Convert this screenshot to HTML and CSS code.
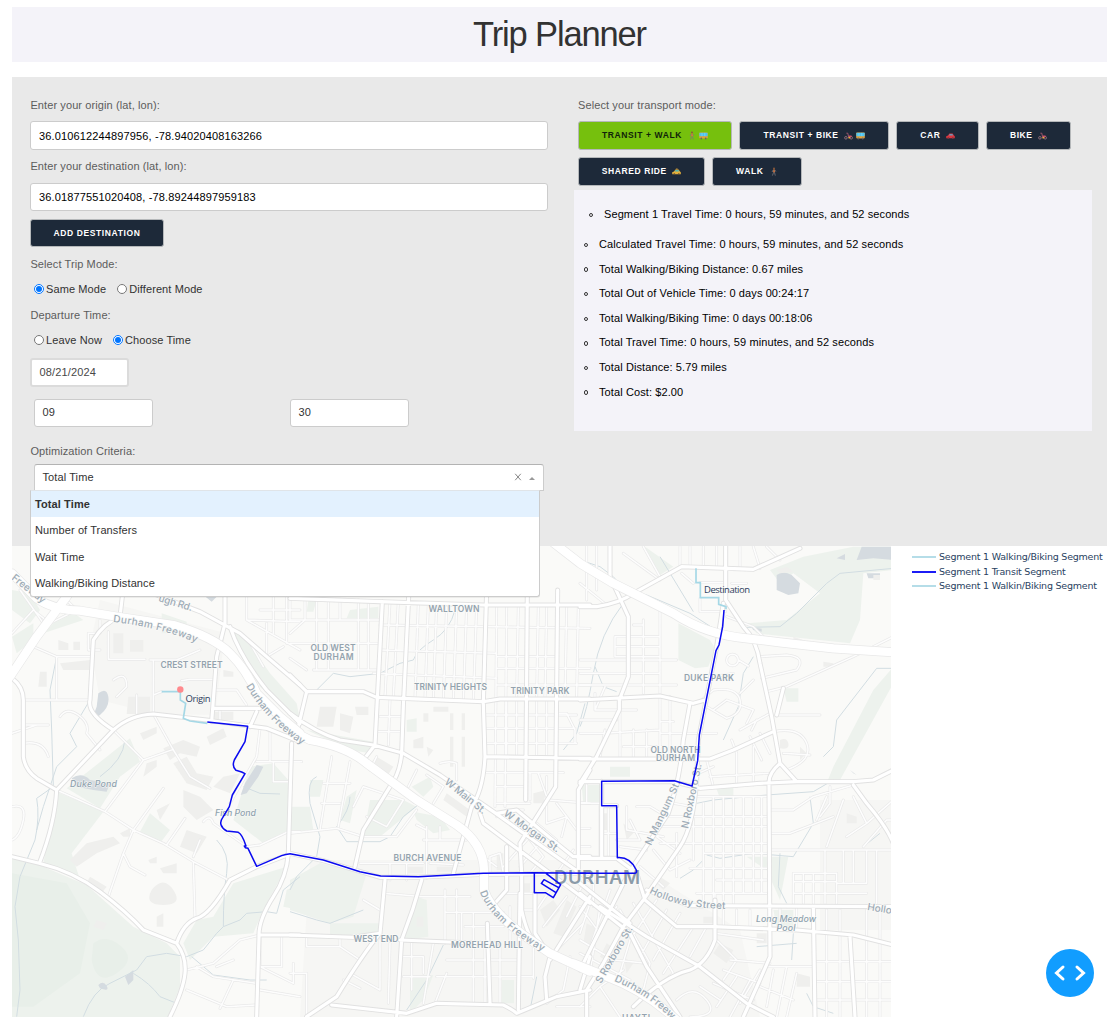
FILE: index.html
```html
<!DOCTYPE html>
<html lang="en">
<head>
<meta charset="utf-8">
<title>Trip Planner</title>
<link rel="stylesheet" href="styles.css">
</head>
<body>
<svg class="defs" width="0" height="0" aria-hidden="true">
  <symbol id="i-walk" viewBox="0 0 9 9"><circle cx="5" cy="1.4" r="1" fill="#8a5a3c"/><path d="M4.200 2.600h1.600l.2 3H4.200z" fill="#d8763e"/><path d="M4.200 3L3 5M5.900 3l1 1.600M4.600 5.400L3.400 8.600M5.500 5.400l.8 3.200" stroke="#77777c" stroke-width=".8" fill="none"/></symbol>
  <symbol id="i-bus" viewBox="0 0 9 9"><rect x=".2" y="1.600" width="8.600" height="5.800" rx=".8" fill="#e2a13c"/><rect x=".4" y="1.800" width="8.200" height="3.400" fill="#4dc3f0"/><path d="M3 1.800v3.400M5.800 1.800v3.400" stroke="#9be3ff" stroke-width=".5"/><circle cx="2.300" cy="7.500" r=".9" fill="#666"/><circle cx="6.700" cy="7.500" r=".9" fill="#666"/></symbol>
  <symbol id="i-bike" viewBox="0 0 9 9"><g fill="none" stroke="#96727f" stroke-width=".9"><circle cx="1.900" cy="6.800" r="1.300"/><circle cx="7.200" cy="6.800" r="1.300"/></g><path d="M2.400 2.200h1.400L4.600 6h2" stroke="#a85a72" stroke-width=".9" fill="none"/><path d="M4.600 4.500h2.800l.6 1.600H5z" fill="#c8526a"/><rect x="4.400" y="6" width="1.800" height="1.400" fill="#f3b13a"/></symbol>
  <symbol id="i-car" viewBox="0 0 9 9"><path d="M.2 7.200V5.200L2 4.600 3.400 2.400h3.200L8 4.600l.8.7v1.900z" fill="#d9363f"/><path d="M2.800 4.500L3.800 3h2.500l.9 1.500z" fill="#6f97b5"/><circle cx="2.300" cy="7.200" r=".9" fill="#6d3940"/><circle cx="6.800" cy="7.200" r=".9" fill="#6d3940"/></symbol>
  <symbol id="i-taxi" viewBox="0 0 9 9"><path d="M.2 7.200V5.200L2 4.600 3.400 2.400h3.200L8 4.600l.8.7v1.900z" fill="#e5b03a"/><path d="M2.600 4.600L3.600 2.900h2.700l1.100 1.700z" fill="#50b5b5"/><path d="M3.900 1.600h1.800v.8H3.900z" fill="#e9a93a"/><circle cx="2.300" cy="7.200" r=".9" fill="#5b4a33"/><circle cx="6.800" cy="7.200" r=".9" fill="#5b4a33"/></symbol>
</svg>

<header class="title-bar"><h1>Trip Planner</h1></header>

<main class="panel">
  <section class="form">
    <label class="label">Enter your origin (lat, lon):</label>
    <div class="field">36.010612244897956, -78.94020408163266</div>
    <label class="label label-dest">Enter your destination (lat, lon):</label>
    <div class="field">36.01877551020408, -78.89244897959183</div>
    <button class="btn btn-add">Add Destination</button>
    <div class="label label-mode">Select Trip Mode:</div>
    <div class="radios">
      <label><input type="radio" name="mode" checked>Same Mode</label>
      <label><input type="radio" name="mode">Different Mode</label>
    </div>
    <div class="label label-dep">Departure Time:</div>
    <div class="radios radios-time">
      <label><input type="radio" name="dep">Leave Now</label>
      <label><input type="radio" name="dep" checked>Choose Time</label>
    </div>
    <div class="field date">08/21/2024</div>
    <div class="time-row">
      <div class="field time">09</div>
      <div class="field time">30</div>
    </div>
    <div class="label label-opt">Optimization Criteria:</div>
    <div class="select">
      <div class="select-box"><span>Total Time</span><svg class="clear" width="8" height="8" viewBox="0 0 8 8"><path d="M1.2.8l5.6 6.4M6.8.8L1.2 7.2"/></svg><i class="arrow"></i></div>
      <ul class="menu">
        <li class="active">Total Time</li>
        <li>Number of Transfers</li>
        <li>Wait Time</li>
        <li>Walking/Biking Distance</li>
      </ul>
    </div>
  </section>

  <section class="modes">
    <div class="label">Select your transport mode:</div>
    <div class="mode-row">
      <button class="btn w154 selected">Transit + Walk <svg><use href="#i-walk"/></svg><svg><use href="#i-bus"/></svg></button>
      <button class="btn w150">Transit + Bike <svg><use href="#i-bike"/></svg><svg><use href="#i-bus"/></svg></button>
      <button class="btn w83">Car <svg><use href="#i-car"/></svg></button>
      <button class="btn w85">Bike <svg><use href="#i-bike"/></svg></button>
      <button class="btn w127">Shared Ride <svg><use href="#i-taxi"/></svg></button>
      <button class="btn w90">Walk <svg><use href="#i-walk"/></svg></button>
    </div>
    <ul class="results">
      <li class="segment">Segment 1 Travel Time: 0 hours, 59 minutes, and 52 seconds</li>
      <li>Calculated Travel Time: 0 hours, 59 minutes, and 52 seconds</li>
      <li>Total Walking/Biking Distance: 0.67 miles</li>
      <li>Total Out of Vehicle Time: 0 days 00:24:17</li>
      <li>Total Walking/Biking Time: 0 days 00:18:06</li>
      <li>Total Travel Time: 0 hours, 59 minutes, and 52 seconds</li>
      <li>Total Distance: 5.79 miles</li>
      <li>Total Cost: $2.00</li>
    </ul>
  </section>
</main>

<section class="plot">
<svg class="map" width="879" height="471" viewBox="12 546 879 471">
  <defs>
    <g id="minor">
      <g transform="translate(0 590) scale(.33333)">
        <path d="M100 170L170 200H270M170 200V330H70M270 330H70M325 125V208H435M450 210H530L600 180M460 210V372L520 480 570 560 630 595M545 272L570 268H640M460 315L485 305M640 300H710L740 345M660 355V390M340 420L430 510 315 665M430 510L520 478M170 600L315 665 400 720 490 760 580 815 685 870M490 595L400 720 370 790 325 920M370 790L390 830 435 855M580 815L585 985M555 685L500 765M600 750L580 800M610 695Q630 670 640 700L740 770 780 765 865 725H900M780 415L770 500 690 640M770 515H900M810 420V515M820 515V575H865M560 1140L640 1120 720 1050 780 1035M590 1130L640 1160 770 1180M560 1200L680 1250 770 1245M700 1170L660 1255M650 1130L700 1110M780 1040V1130H845V1040M780 1130L880 1180V1120M780 1200L900 1220M36 130L100 60 150 100 230 60 200 30M60 0L130 100M180 380Q200 350 235 375T260 430L300 480M70 405H145M70 460Q130 450 145 500M36 430L110 405M340 270Q380 240 380 290L350 320M410 315V370M300 90V130H265V180H300M740 0V90L900 95M740 90L900 180M800 100V200L850 170M745 150L790 230M780 60H900M820 0V130M860 0V160M870 10V90M36 650Q80 640 70 690T36 750"/>
      </g>
      <g transform="translate(290 590) scale(.33333)">
        <path d="M45 30V90L0 130M80 30V240M115 30V240M150 30V90M205 30V240M235 40V240M0 90H270M0 160H270M70 240H270M0 205L50 240M270 105L900 115M270 180L620 190M250 250L620 265M300 35L285 320M325 35L310 320M385 40L375 325M415 40L405 325M440 40L430 325M470 45L460 330M500 45L490 330M530 45L520 335M560 45L550 335M620 50L615 650M650 50L645 650M685 50L680 320M745 50L740 320M770 50L765 320M830 50L825 320M865 50L860 320M620 235H900M620 285H900M620 200H800M585 375H860M585 415H855M585 460H860M585 548H820M650 330V500M680 330V500M740 330V500M770 330V500M615 590H705M620 640H720M270 380H335M265 425H335M300 330L295 465M340 490L320 560M380 540L355 590M410 555L460 590 430 640M260 500L240 540M450 520Q480 510 500 520V570M125 500L90 720M180 515L145 710M100 580H180M95 640H150M0 730L140 715 220 740 320 740M190 650L220 590 340 630 290 710 230 680M320 740L380 660M410 710V865M450 710V750M400 750H530M0 515H35M380 705L410 720M210 820H400M300 820V870M350 820V870M420 820L520 825M395 920H540M280 910L400 920M220 930L270 960M465 900V1060M500 900V1060M515 970V1050M465 967H640M550 970V1240M585 1060V1240M630 1060V1240M525 1010H640M470 1110H680M440 1160H730M660 950V1060M690 960H735M650 910H735M600 850V800L630 790 640 850M730 1060V1165M470 1150L435 1240M50 1040V1070H150V1040M0 1150H50V1280M150 1070L210 1110M180 1150L270 1200M160 1170L210 1195M270 1050V1200M300 1060L295 1240M340 1100H400V1150M365 1060V1200M340 1160L420 1160M430 1060L400 1240M580 800L620 830M720 550V630M745 550L770 620M770 560V600M775 630L900 640M740 700L800 750M770 640V700L830 680 815 740M865 715H900M865 770H900M680 700L760 800 720 850M720 740L640 830M750 760L690 830M850 780L800 850M620 680L650 660H700M800 640L860 720M800 370H830L855 420V460H800M880 1000L790 1090M830 920L760 1010M880 880L830 980M800 870L740 960M840 1100L820 1200 770 1240M800 1250H900"/>
      </g>
      <g transform="translate(580 540) scale(.33333)">
        <path d="M0 130L80 195M20 20V180M50 20V150M130 40L240 120M190 20L240 110M300 80V20M330 20V80M370 20V80M410 20V80M480 20V88M520 20L540 85M560 20L600 60M305 100L340 130M360 128H437M360 175V215H437M455 130H500M440 230L520 260 560 300M240 210V460M105 290H240M105 320H240M105 350H240M0 360H290M0 400H240M0 435H290M190 240V460M160 255H190M105 290V350M45 460V510H170M75 440L45 510M240 470V650M270 470V650M0 580H70L240 570M75 570L60 650M120 510V650M160 570V650M200 570V650M240 580H410M130 620H250M0 540H110M240 545H280M365 480L400 450Q470 440 480 480T440 535L380 500M400 510L440 480 520 510 500 550M440 360A16 16 0 1 1 475 360 16 16 0 1 1 440 360M460 400L400 410M475 360L505 378M540 350L620 345Q680 350 650 390L545 415M560 455L620 440 820 350 940 290M610 445L590 525H720M520 420L480 460M530 540L515 570M570 520L480 570M455 600L470 640M510 590L545 660M540 580L570 640M580 575Q660 560 680 610T620 690M610 640L690 645M380 660L400 740M470 640V740M520 620V735M390 710L565 700M355 700L400 680M350 770H560M250 830L560 830M260 800L280 790 340 800M240 860H565M240 910H565M290 880V1010M340 790V960M370 790V1090M400 770V1090M430 770V1080M460 770V1090M490 770V1060M520 770V1060M545 770V1060M370 940H565M330 985H565M410 1020H560M350 1060H560M570 810H640L700 770 820 735M570 880H630L760 830M640 1000H770V1090M640 1000V1090M670 1000V1090M700 1000V1090M735 930V1090M640 1025H770M640 1060H860M570 930H940M770 1030H860V930M790 930V1030M820 930V1030M890 930V1090M740 920L790 780M740 770L710 840M750 740V790L720 830M820 770L860 850 800 890M860 850L940 780M850 920L920 840H940M170 800H210L260 830M140 800V870L250 890M65 880H110M60 797V950M85 797V950M150 840L180 900 110 900M120 920L200 930M220 930L270 990 330 960M230 890L300 940M180 980L250 1040M0 790H60M20 730V790M0 1000H40V1100M0 1100L60 1180M40 1060L0 1180M60 1100L30 1300M90 1050L20 1250M110 1100L60 1160M120 1110L210 1270 190 1350M160 1090L280 1300 230 1340M230 1080L150 1200 120 1300M260 1110L180 1250M300 1120L220 1260M340 1160L250 1300M380 1160L330 1250M0 1200L100 1260 200 1270M0 1240L150 1320M0 1400L60 1340 120 1431M60 1340L130 1290M405 1180L550 1200M405 1100V1060M430 1110V1160M470 1110V1160M510 1110V1160M600 1100V1170M650 1100V1170M740 1110V1185M780 1110V1190M860 1110V1190M900 1110V1200M740 1185V1431M780 1190V1431M860 1200V1431M900 1210V1431M705 1265H940M705 1325H940M705 1380H940M410 1200L470 1260 430 1320M430 1290L540 1330M400 1330L520 1380M450 1260L570 1270M470 1310L410 1400M510 1320L450 1431M540 1290L480 1390M560 1280H700M540 1340L640 1380M580 1290L560 1400M620 1280L590 1431M650 1300L620 1431M290 1380Q340 1330 380 1380T330 1431M360 1340L420 1380"/>
      </g>
    </g>
    <g id="major">
      <g transform="translate(0 590) scale(.33333)">
        <path d="M36 265Q70 290 70 330V500Q75 540 110 565L170 600 340 420Q390 375 460 372L620 390 740 407 800 415 900 455M170 600Q165 700 118 820M36 800L118 820Q220 845 300 905T430 1020L530 1060Q560 1100 555 1150T510 1280M530 1060Q550 1000 590 985 630 975 690 870L770 830 870 792M875 460L865 790Q860 860 820 920 775 990 777 1040L770 1280M340 420Q260 370 270 330L280 150Q310 100 360 80L367 20M675 0V100L650 200 635 395M470 15L600 65 720 130 800 200 900 285M690 110Q720 200 800 300L900 400M640 355H780M750 410L770 365M780 1035H900"/>
      </g>
      <g transform="translate(290 590) scale(.33333)">
        <path d="M0 25L270 35 580 45H900M277 35L255 465 220 510M357 0L340 350 335 490Q330 550 300 590L220 720 195 830M590 0L580 340 585 500Q580 600 545 650L490 850M712 0L707 630M803 0L797 590 690 760 695 850M0 255L50 305H220L260 322 580 335 630 327H900M50 305L20 430M0 370Q80 430 150 450L250 465 340 490 450 555 610 665 800 800 900 870M585 500L900 505M570 670L580 700 900 940M620 670L680 660 800 760 850 800 900 800M0 1035L190 1042 270 1030 285 870M395 870Q370 960 335 1050L320 1280M330 1050L620 1062M270 1030Q220 1090 140 1220L50 1280M0 790L100 812 270 862H380L580 853 900 850M125 1245L350 1270 440 1240 640 1245Q670 1260 680 1270L800 1220 900 1200M690 910L685 1260M735 910V1030L780 1100 765 1160 770 1230M780 1110L900 920M592 1000L600 1240M650 770V900L610 945M865 850V600L900 540M695 850V960Q710 1030 730 1050M870 1200L900 1100"/>
      </g>
      <g transform="translate(580 540) scale(.33333)">
        <path d="M437 0V180L490 260Q530 300 540 370L575 530 600 670 650 725H820L880 720 940 690M0 200H50Q120 190 160 160L305 80 520 88 660 25M90 0V110L145 230V410L118 480V510L50 650 0 730M0 480L240 468 340 490 375 480M330 490L310 600Q300 720 265 820L165 970 130 1030 0 1290M430 190L410 320 355 600 350 720Q340 860 300 920L190 1080 130 1160 70 1270 20 1350V1431M0 657H390L460 630 580 575M0 725H280L360 745 540 730 650 725M600 670Q565 700 567 730L570 1250Q540 1320 490 1431M820 735L860 790Q920 860 940 910M0 955H110L170 1000 195 1080 290 1160 400 1160 650 1170 820 1185 940 1215M200 1050L330 1097 940 1100M405 1080V1200Q380 1270 330 1290 250 1310 160 1400M700 1100L705 1431M810 1190L825 1431M0 1060L150 1180 200 1280 300 1431M60 1100L200 1190 360 1280 500 1390 580 1431M0 1030L150 1150M65 724V955M110 797L65 797M590 525L610 445"/>
      </g>
    </g>
    <g id="freeway">
      <path transform="translate(0 590) scale(.33333)" d="M36 -50L110 25Q160 60 240 62L350 80 520 105Q640 140 690 190 740 240 770 310L840 380 900 430M30 260L110 140 200 20 250 -60"/>
      <path transform="translate(290 590) scale(.33333)" d="M0 420L60 450Q170 470 230 520L380 630 500 705Q580 760 582 840V900Q600 960 700 1035L780 1090 900 1145"/>
      <path transform="translate(580 540) scale(.33333)" d="M-90 0L0 70 100 130 280 220Q380 285 500 295L600 307 760 325 945 337M-20 1270L80 1310Q190 1350 290 1440"/>
    </g>
    <path id="fw1" d="M113 622Q160 627 202 645"/>
    <path id="fw2" d="M246 686Q268 724 310 750"/>
    <path id="fw3" d="M480 892Q490 923 552 957"/>
    <path id="fw4" d="M614 981Q650 996 672 1020"/>
    <path id="hollow" d="M649 893Q680 909 729 909"/>
  </defs>

  <rect class="land" x="12" y="546" width="879" height="471"/>
  <g class="urban">
    <path d="M100 600L225 633 215 715 155 714 100 700 90 645zM310 860H560L640 930 700 1017H300zM590 880H660L740 930 760 1017H600zM820 800H891V930H820z"/>
  </g>
  <g class="park">
    <g transform="translate(0 590) scale(.33333)">
      <path d="M36 800L118 825 260 885 400 1010 500 1060 540 1100 540 1190 500 1290H36zM170 605L310 665 215 790 240 870 130 820zM390 445L270 540 200 595 300 655 360 560 420 515zM640 980L700 880 860 830 790 960 760 1030 640 1040 570 1110 550 1060 590 990zM750 530L820 520 865 570V720L790 760 700 690zM450 670L510 720 480 760 420 725zM485 70L560 95V130H485zM680 110L780 290 900 390 890 340 810 250 720 120zM130 130L250 90 210 60 160 100zM50 190L100 150V100L36 140zM36 0L90 10 120 60 90 100 36 60zM860 900L900 880V960L850 950z"/>
      <path class="deep" d="M36 850L200 880 270 1000 240 1150 100 1250H36zM280 1060Q320 1030 365 1070T350 1150 275 1110z"/>
    </g>
    <g transform="translate(290 590) scale(.33333)">
      <path d="M0 870L90 820 230 850 190 980 120 1000 0 960zM120 1000H270V1035H120zM380 920L410 930 415 1040 340 1050zM50 420L250 455 240 490 180 480zM240 630L340 630 380 650 270 740H220zM370 665L450 680 480 720 430 730 380 690zM365 590L420 560 430 590 400 620zM0 650L60 650 70 720 0 725zM60 570L100 570 90 620H60zM170 620L200 600 180 700 150 690zM350 390L380 385V425H350zM635 1170H672V1240H635zM360 1160L430 1155 400 1230 360 1270zM180 60L265 50V85H170zM55 30H80L70 65H50zM875 585H900V640H880z"/>
    </g>
    <g transform="translate(580 540) scale(.33333)">
      <path d="M295 250L390 300 405 325 385 380 345 385 295 360zM195 20L280 80 240 105zM570 90L670 50 820 20H940V90L850 100 840 240 810 310 530 280 500 250 620 240 720 160 640 100 600 130zM90 680H150V710H90zM10 735H60V790H10zM500 950H625L600 1080 560 990zM610 445H655V485H620zM760 680L880 450 940 380V430L780 720 740 730zM580 1110H640V1170L590 1160zM405 735H460V775H420z"/>
    </g>
  </g>
  <g class="water">
    <g transform="translate(0 590) scale(.33333)">
      <path d="M295 310Q320 290 325 320T300 375 290 350zM215 565Q245 545 270 570L330 580 320 605 280 600 230 590zM610 15L650 20 635 35zM770 525L790 530 775 560 740 610 722 615 735 580zM375 1160L400 1140 400 1170 385 1185zM295 1185Q310 1170 320 1188T300 1195z"/>
    </g>
    <g transform="translate(580 540) scale(.33333)">
      <path d="M590 105Q610 90 635 105L660 130 655 160 625 165 590 150zM845 20H940V60L880 55 830 60zM860 100H900V115H865zM770 55L795 42V60zM515 262L545 266V275L520 270zM810 690L830 705 820 700z"/>
    </g>
    <g class="stream">
      <path transform="translate(0 590) scale(.33333)" d="M170 200L150 300 155 420 160 590 110 625Q120 680 105 750L60 860 45 950 55 1050 60 1200 50 1280M375 450Q370 510 300 560M650 750Q690 790 680 850T670 1010L720 990 740 970 800 965 830 970 850 900 900 860M250 1280Q280 1200 330 1180L410 1140 440 1100 500 1090 560 1100 610 1080 650 1030 670 1010M400 1150Q450 1180 480 1220L530 1240M575 1100L640 1155 750 1170 800 1170M730 590L780 610 840 612M270 330L210 430 230 470 170 530 130 650 110 720"/>
      <path transform="translate(290 590) scale(.33333)" d="M495 60Q480 120 430 150T370 210L330 220 270 250 180 260 130 250 80 300M80 560Q50 570 60 640L90 740 80 800 20 860 0 900M0 965L80 990 120 1000 220 960M180 620Q180 660 140 710L170 755 270 755 300 740 340 680 390 640M885 340L860 430 820 480M460 1065L410 1170 350 1260M740 1160L720 1260"/>
      <path transform="translate(580 540) scale(.33333)" d="M0 60L60 80 100 110 130 145 160 155 200 165 330 220 400 265M130 190Q60 280 40 400T0 560M240 50L340 215M520 350L490 400 475 500 430 600M500 262L600 260 650 220 740 130 780 100 940 85M940 385H890L770 540 760 620 730 650M350 790L400 780 560 765 700 755 760 720M380 945L420 955 520 940 640 950 700 850 690 770M600 940L595 1040 620 1090M640 1180L635 1260M650 1210L530 1220M680 1360L700 1400 760 1420M300 1015L340 990 370 960M45 380L70 440 110 455M850 920L900 880"/>
    </g>
  </g>
  <g class="building">
    <g transform="translate(0 590) scale(.33333)">
      <path d="M385 320H450V372H380zM180 220L270 210V240H190zM175 150L205 160V180H175zM220 155H240V180H220zM120 245H140V290H115zM340 130V190H370V130zM390 150V185H430V150zM620 440L670 415 680 440 630 465zM640 365H700V390H640zM490 475L550 450 600 470 590 500 540 490 510 510zM520 520L560 500 590 550 640 560 620 600 560 580zM270 860L320 890 300 915 260 880zM455 900Q490 855 520 900T490 945 455 900zM470 980L490 970V1010H470zM550 600L600 620 640 660 590 690 550 650zM210 810L260 760 340 740 360 760 290 790 230 830zM445 810L470 800V820H450zM480 835L530 820V850H490zM360 730L390 715V740H370zM670 560L720 550 690 610 640 590zM440 520L470 510V530L430 560zM470 660L510 640 480 690zM560 720L620 740 590 790 540 770zM290 990L320 1000 310 1020 280 1010zM420 430L470 410V430L430 450zM670 240L700 245V260H670z"/>
    </g>
    <g transform="translate(290 590) scale(.33333)">
      <path d="M90 350H140L130 410H80zM150 370L190 380 180 430 150 420zM195 350H235V375H200zM370 450L400 440V475H370zM410 470L430 480 415 500zM480 370H490V420H480zM515 370H525V420H515zM480 440H490V530H480zM515 440H525V530H515zM430 350H475V365H430zM400 370H415V395H400zM260 500L310 530 290 560 240 520zM470 610L540 660 530 680 460 630zM750 960L790 930 810 960 770 1010zM830 930L860 950 820 1040 790 1030zM730 610L770 600 760 640H730zM620 790H640V840H620zM690 880H720V910H690zM350 830H400V850H350zM440 830H500V845H440zM380 980H400V1010H380z"/>
    </g>
    <g transform="translate(580 540) scale(.33333)">
      <path d="M600 600Q620 590 625 610T600 625zM660 620L680 640 660 660zM590 90L620 80 640 95 600 100zM880 105H900V120H880zM640 290L670 300V310H640zM730 365L760 370V380H730zM420 1210L460 1230 440 1270 400 1240zM20 1150L60 1170 40 1220 10 1210zM80 1210L110 1230 90 1270 60 1250zM240 1010L270 1030 250 1050 230 1030zM370 1130H400V1150H370zM130 850L160 880 140 900zM130 1250L160 1270 140 1300zM70 820H85V870H70zM800 820L830 830V850H800zM530 1180H560V1210H530zM650 1300L690 1310V1340H650z"/>
    </g>
  </g>

  <use href="#minor" class="minor-case"/><use href="#minor" class="minor-core"/>
  <use href="#major" class="major-case"/><use href="#major" class="major-core"/>
  <use href="#freeway" class="free-case"/><use href="#freeway" class="free-core"/>

  <g class="road-label">
    <text x="11" y="579" transform="rotate(38 11 579)" textLength="40">Freeway</text>
    <text x="158" y="601" transform="rotate(17 158 601)" textLength="35">ugh Rd.</text>
    <text textLength="86"><textPath href="#fw1">Durham Freeway</textPath></text>
    <text textLength="82"><textPath href="#fw2">Durham Freeway</textPath></text>
    <text textLength="88"><textPath href="#fw3">Durham Freeway</textPath></text>
    <text><textPath href="#fw4">Durham Freeway</textPath></text>
    <text textLength="79"><textPath href="#hollow">Holloway Street</textPath></text>
    <text x="867" y="910" transform="rotate(9 867 910)">Holloway</text>
    <text x="444" y="783" transform="rotate(39 444 783)" textLength="50">W Main St.</text>
    <text x="503" y="815" transform="rotate(35 503 815)" textLength="66">W Morgan St.</text>
    <text x="651" y="846" transform="rotate(-65 651 846)" textLength="70">N Mangum St.</text>
    <text x="688" y="829" transform="rotate(-78 688 829)" textLength="66">N Roxboro St.</text>
    <text x="601" y="984" transform="rotate(-60 601 984)" textLength="64">S Roxboro St.</text>
  </g>
  <g class="area-label">
    <text x="191.500" y="667.500" textLength="62">CREST STREET</text>
    <text x="454" y="611.500" textLength="51">WALLTOWN</text>
    <text x="333" y="651" textLength="45">OLD WEST</text>
    <text x="333.500" y="659.500" textLength="40">DURHAM</text>
    <text x="450.500" y="690" textLength="73">TRINITY HEIGHTS</text>
    <text x="540" y="693.500" textLength="59">TRINITY PARK</text>
    <text x="427.500" y="861" textLength="68">BURCH AVENUE</text>
    <text x="376" y="942" textLength="45">WEST END</text>
    <text x="487" y="948" textLength="72">MOREHEAD HILL</text>
    <text x="709" y="681" textLength="50">DUKE PARK</text>
    <text x="675.500" y="753" textLength="50">OLD NORTH</text>
    <text x="675.500" y="761" textLength="39">DURHAM</text>
    <text x="636" y="1021" textLength="28">HAYTI</text>
  </g>
  <text class="city-label" x="597" y="883.500" textLength="86">DURHAM</text>
  <g class="water-label">
    <text x="93.500" y="787" textLength="47">Duke Pond</text>
    <text x="235.500" y="816" textLength="41">Fish Pond</text>
    <text x="786" y="921.500" textLength="60">Long Meadow</text>
    <text x="786" y="931" textLength="19">Pool</text>
  </g>

  <g class="walk-line">
    <path transform="translate(0 590) scale(.33333)" d="M485 305H541V330L557 340 550 385 570 393 622 400"/>
    <path transform="translate(580 540) scale(.33333)" d="M348 85V128H361V173H416V193L438 200V208"/>
  </g>
  <circle cx="180.300" cy="689.500" r="3.200" fill="#ff8a8e"/>
  <g class="transit-line">
    <path transform="translate(0 590) scale(.33333)" d="M622 396L743 409 735 455 703 510Q695 530 708 541L725 546 735 551 697 615 688 650 668 683Q652 705 680 723L715 727Q727 733 738 768L733 768 736 773 744 775 770 829 845 797Q857 792 871 791"/>
    <path transform="translate(290 590) scale(.33333)" d="M0 791L100 810 210 845 272 858 385 860 580 850 733 848 900 850M733 848V908H766L790 923 812 884 768 850M753 882L762 869 806 893M755 881L798 908"/>
    <path transform="translate(580 540) scale(.33333)" d="M432 210L428 260 417 315 408 332 358 585 353 662 336 738 283 722 65 724V797H110L112 953Q150 950 169 990 172 999 163 1000H0"/>
  </g>
  <text class="point-label" x="185.500" y="702" textLength="25">Origin</text>
  <text class="point-label" x="704" y="593" textLength="46">Destination</text>
</svg>
<ul class="legend">
  <li>Segment 1 Walking/Biking Segment</li>
  <li class="transit">Segment 1 Transit Segment</li>
  <li>Segment 1 Walkin/Biking Segment</li>
</ul>
</section>

<div class="debug"><svg width="48" height="48" viewBox="0 0 48 48"><path d="M17 18l-6.500 6 6.500 6M31 18l6.500 6-6.500 6"/></svg></div>
</body>
</html>
```
FILE: styles.css
```css
* { box-sizing: border-box; }
body {
  margin: 0;
  padding: 7px 10px 0 12px;
  height: 1017px;
  overflow: hidden;
  background: #fff;
  font: 11px/16px "Liberation Sans", Arial, sans-serif;
  letter-spacing: .1px;
  color: #323232;
}
ul { list-style: none; margin: 0; padding: 0; }
.defs { position: absolute; }

.title-bar { height: 55px; background: #f4f3f9; }
h1 {
  margin: 0;
  font-size: 34.500px;
  font-weight: 400;
  line-height: 54px;
  letter-spacing: -1.150px;
  text-align: center;
}

.panel {
  display: flex;
  height: 469px;
  margin-top: 15px;
  padding: 20px 15px 0 18px;
  background: #e9e9e9;
}
.form { width: 518px; margin-right: 26px; }
.label { display: block; height: 16px; padding-left: .4px; color: #5c5c5c; }
.field {
  display: flex;
  align-items: center;
  height: 29px;
  margin-top: 8px;
  padding: 1px 8px 0;
  border: 1px solid #ccc;
  border-radius: 3px;
  background: #fff;
  color: #000;
  letter-spacing: .14px;
}
.label-dest { margin-top: 8px; }
.label-dest + .field { margin-top: 9px; height: 28px; padding: 0 8px 1px; }

.btn {
  height: 29px;
  padding: 0;
  border: 1px solid #b5b8ba;
  border-radius: 3px;
  background: #1d2939;
  color: #fff;
  font: bold 8.500px/27px "Liberation Sans", Arial, sans-serif;
  letter-spacing: .6px;
  text-transform: uppercase;
  text-align: center;
  white-space: nowrap;
}
.btn svg { width: 9px; height: 9px; margin-left: 2.500px; vertical-align: -2px; }
.btn-add { display: block; width: 134px; height: 28px; margin-top: 8px; }
.selected { background: #76c00d; color: #10230a; }
.w154 { width: 154px; }
.w150 { width: 150px; }
.w83 { width: 83px; }
.w85 { width: 85px; }
.w127 { width: 127px; }
.w90 { width: 90px; }

.label-mode { margin-top: 9px; }
.radios { display: flex; gap: 11px; height: 16px; margin: 9px 0 0 4px; }
.radios label { display: flex; align-items: center; gap: 2px; }
.radios input { width: 10px; height: 10px; margin: -1px 0 0; }
.label-dep { margin-top: 10px; }
.date { width: 99px; height: 29px; margin: 10px 0 0; padding: 0 7.500px 1px; color: #484848; border: 2px solid #dbdbdb; }
.time-row { display: grid; grid-template-columns: 256px 119px; margin: 12px 0 0 4px; }
.time { width: 119px; height: 28px; margin: 0; padding: 0 7.500px 2px; color: #333; }
.label-opt { margin-top: 16px; }

.select { position: relative; margin: 5px 0 0 4px; width: 510px; }
.select-box {
  display: flex;
  align-items: center;
  height: 27px;
  padding: 0 8px 1px 7.500px;
  border: 1px solid #ccc;
  border-top-color: #b3b3b3;
  border-radius: 3px 3px 0 0;
  background: #fff;
}
.select-box span { flex: 1; }
.clear { fill: none; stroke: #888; stroke-width: 1; margin-right: 7px; }
.arrow { border: 3px solid transparent; border-top: 0; border-bottom-color: #999; margin-top: 3px; }
.menu {
  position: absolute;
  z-index: 2;
  top: 26px;
  left: -4px;
  width: 510px;
  height: 107px;
  border: 1px solid #ccc;
  border-top-color: #e0e4e8;
  border-radius: 0 0 3px 3px;
  background: #fff;
  box-shadow: 0 1px 0 rgba(0, 0, 0, .06);
}
.menu li { height: 26.300px; padding-left: 4px; line-height: 27px; }
.menu .active { background: #e3f1fe; font-weight: 700; }

.modes { width: 518px; }
.modes .label { padding-left: 4px; }
.mode-row { display: flex; flex-wrap: wrap; gap: 7px; padding: 8px 0 0 4px; }
.results { height: 241px; margin-top: 4px; padding-top: 16px; background: #f4f3f9; color: #000; }
.results li { display: flex; align-items: center; height: 16px; margin-bottom: 8.600px; padding-left: 9.500px; }
.results li::before {
  content: "";
  flex: none;
  width: 4.500px;
  height: 4.500px;
  margin: 2px 11px 0 0;
  border: 1.500px solid #333;
  border-radius: 50%;
  padding: 0;
  box-sizing: border-box;
}
.results .segment { padding-left: 14.500px; margin-bottom: 14px; }

.plot { display: flex; }
.map { flex: none; display: block; }
.legend {
  padding: 4px 0 0 21px;
  font: 9.500px/14.500px "DejaVu Sans", Verdana, sans-serif;
  letter-spacing: -.22px;
  color: #2a3f5f;
}
.legend li { display: flex; align-items: center; white-space: nowrap; }
.legend li::before { content: ""; width: 24px; height: 2px; margin-right: 3px; background: #b5dde8; }
.legend .transit::before { background: #1c1cf5; }

.land { fill: #fafaf8; }
.urban { fill: #f6f6f4; }
.park { fill: #edf2ed; }
.deep { fill: #e8efe9; }
.water { fill: #d5dbe0; }
.stream { fill: none; stroke: #d2dde2; stroke-width: 3; stroke-linejoin: round; }
.building { fill: #efefed; }
.minor-case, .minor-core, .major-case, .major-core, .free-case, .free-core { fill: none; stroke-linejoin: round; stroke-linecap: round; }
.minor-case { stroke: #e9e9e9; stroke-width: 8.500; }
.minor-core { stroke: #fdfdfd; stroke-width: 4.500; }
.major-case { stroke: #e1e1e1; stroke-width: 15; }
.major-core { stroke: #fff; stroke-width: 9.500; }
.free-case { stroke: #e8e8e8; stroke-width: 29; }
.free-core { stroke: #fff; stroke-width: 25; }

.map text { letter-spacing: 0; }
.road-label, .area-label, .water-label, .city-label { font-family: Inter, "Open Sans", sans-serif; paint-order: stroke; stroke: #fafaf8; stroke-linejoin: round; }
.road-label { font-size: 10px; font-weight: 500; fill: #9dabb6; stroke-width: 1.500; }
.area-label { font-size: 8.500px; font-weight: 600; fill: #94a3ae; stroke-width: 1.500; text-anchor: middle; }
.water-label { font-size: 8.800px; font-style: italic; font-weight: 500; fill: #8fa3af; stroke-width: 1; text-anchor: middle; }
.city-label { font-size: 18.500px; font-weight: 600; fill: #8b9ba8; stroke-width: 1.500; text-anchor: middle; }
.walk-line { fill: none; stroke: #a5d8e6; stroke-width: 5; }
.transit-line { fill: none; stroke: #0a0af0; stroke-width: 4.500; stroke-linejoin: round; }
.point-label { font: 9.500px "Open Sans", sans-serif; fill: #2f3f60; }

.debug { position: fixed; right: 23px; bottom: 20px; width: 48px; height: 48px; border-radius: 50%; background: #119dff; }
.debug path { fill: none; stroke: #fff; stroke-width: 3; stroke-linecap: round; }
```
